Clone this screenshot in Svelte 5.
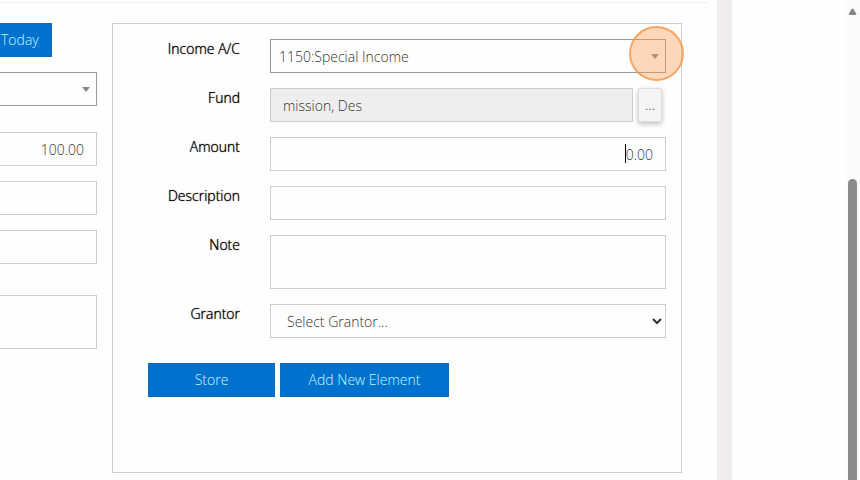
<script lang="ts">
  let incomeAccount = $state("1150");
  let fund = $state("mission, Des");
  let amount = $state("0.00");
  let total = $state("100.00");
  let description = $state("");
  let note = $state("");
  let grantor = $state("");
</script>

<div class="page">
  <main class="content">
    <form class="voucher">
      <button type="button" class="btn today">Today</button>
      <div class="combo">
        <select aria-label="Account"><option></option></select>
        <svg class="arrow" viewBox="0 0 8 5"><path d="M0 0h8L4 5z" /></svg>
      </div>
      <input class="control number total" aria-label="Total" bind:value={total} />
      <input class="control" aria-label="Reference" />
      <input class="control" aria-label="Payee" />
      <textarea class="control memo" aria-label="Memo"></textarea>
    </form>

    <form class="panel">
      <div class="row">
        <label for="income">Income A/C</label>
        <div class="combo">
          <select id="income" bind:value={incomeAccount}>
            <option value="1150">1150:Special Income</option>
          </select>
          <svg class="arrow" viewBox="0 0 8 5"><path d="M0 0h8L4 5z" /></svg>
          <span class="highlight"></span>
        </div>
      </div>

      <div class="row">
        <label for="fund">Fund</label>
        <div class="picker">
          <input id="fund" class="control" readonly bind:value={fund} />
          <button type="button" class="browse">...</button>
        </div>
      </div>

      <div class="row">
        <label for="amount">Amount</label>
        <div class="amount">
          <input id="amount" class="control number" bind:value={amount} />
          <span class="caret"></span>
        </div>
      </div>

      <div class="row">
        <label for="description">Description</label>
        <input id="description" class="control" bind:value={description} />
      </div>

      <div class="row">
        <label for="note">Note</label>
        <textarea id="note" class="control" bind:value={note}></textarea>
      </div>

      <div class="row">
        <label for="grantor">Grantor</label>
        <select id="grantor" class="control" bind:value={grantor}>
          <option value="">Select Grantor...</option>
        </select>
      </div>

      <div class="actions">
        <button type="button" class="btn store">Store</button>
        <button type="button" class="btn add">Add New Element</button>
      </div>
    </form>
  </main>

  <aside class="gutter"></aside>

  <div class="scrollbar">
    <svg class="up" viewBox="0 0 10 8"><path d="M4 1Q5 0 6 1L9 6Q10 8 8 8H2Q0 8 1 6z" /></svg>
    <div class="thumb"></div>
  </div>
</div>

<style>
  :global(body) {
    margin: 0;
    background: #fefefe;
  }

  .page {
    display: flex;
    height: 100vh;
    overflow: hidden;
    font-family: "Open Sans", sans-serif;
    font-size: 14px;
    font-weight: 300;
    line-height: 20px;
    color: #333;
  }

  .content {
    flex: 1;
    display: flex;
    align-items: flex-start;
    gap: 15px;
    margin: 2px 10px 0 0;
    padding: 20px 25px 0 0;
    border-top: 1px solid #eee;
  }

  .voucher {
    flex: none;
    display: flex;
    flex-direction: column;
    gap: 15px;
    width: 109px;
    margin-left: -12px;
  }

  .total {
    margin-top: 11px;
  }

  .memo {
    margin-top: 16px;
  }

  .panel {
    flex: 1;
    display: flex;
    flex-direction: column;
    gap: 15px;
    box-sizing: border-box;
    min-width: 0;
    padding: 15px 15px 75px;
    border: 1px solid #ccc;
  }

  .row {
    display: grid;
    grid-template-columns: 112px 1fr;
    column-gap: 30px;
    align-items: start;
  }

  label {
    color: #000;
    text-align: right;
    text-shadow: 0 0 1px #000;
  }

  input,
  select,
  textarea,
  button {
    box-sizing: border-box;
    margin: 0;
    font: inherit;
    color: inherit;
  }

  .control {
    display: block;
    width: 100%;
    height: 34px;
    padding: 6px 12px;
    border: 1px solid #ccc;
    border-radius: 0;
    background: #fefefe;
  }

  textarea.control {
    height: 54px;
    resize: none;
  }

  .control:focus {
    outline: none;
    border-color: #999;
  }

  .number {
    text-align: right;
  }

  .combo,
  .amount {
    position: relative;
  }

  .combo select {
    display: block;
    width: 100%;
    height: 34px;
    padding: 7px 30px 5px 8px;
    border: 1px solid #999;
    border-radius: 0;
    background: #fefefe;
    appearance: none;
  }

  .arrow {
    position: absolute;
    top: 15px;
    right: 7px;
    width: 8px;
    height: 5px;
    fill: #888;
    pointer-events: none;
  }

  .highlight {
    position: absolute;
    top: -13px;
    right: -18px;
    box-sizing: border-box;
    width: 55px;
    height: 55px;
    border: 2px solid rgba(242, 145, 65, 0.7);
    border-radius: 50%;
    background: rgba(252, 157, 84, 0.4);
    pointer-events: none;
  }

  .picker {
    display: flex;
    gap: 5px;
    padding-right: 4px;
  }

  .picker .control {
    flex: 1;
    min-width: 0;
    background: #eee;
  }

  .browse {
    width: 24px;
    padding: 0;
    border: 1px solid #ddd;
    border-radius: 2px;
    background: #f5f5f5;
    box-shadow: 0 2px 5px rgba(0, 0, 0, 0.25);
  }

  .caret {
    position: absolute;
    top: 7px;
    right: 40px;
    width: 1px;
    height: 19px;
    background: #000;
  }

  .actions {
    display: flex;
    gap: 5px;
    margin-top: 10px;
    padding-left: 20px;
  }

  .btn {
    height: 34px;
    padding: 0 12px;
    border: 1px solid #0f6cb5;
    border-radius: 0;
    background: #0072ce;
    color: #c4f8ff;
  }

  .today {
    align-self: flex-start;
  }

  .store {
    width: 127px;
  }

  .add {
    width: 169px;
  }

  .gutter {
    flex: none;
    width: 113px;
    border-left: 15px solid #f0edee;
  }

  .scrollbar {
    flex: none;
    display: flex;
    flex-direction: column;
    align-items: center;
    box-sizing: border-box;
    width: 15px;
    padding-top: 8px;
    background: #fbfbfb;
  }

  .up {
    width: 9px;
    height: 7px;
    fill: #858585;
  }

  .thumb {
    flex: 1;
    width: 9px;
    margin-top: 164px;
    border-radius: 5px 5px 0 0;
    background: #8b8b8b;
  }
</style>
